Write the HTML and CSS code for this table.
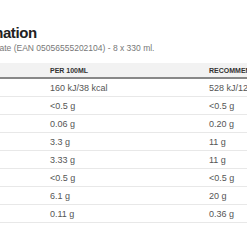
FILE: index.html
```html
<!DOCTYPE html>
<html>
<head>
<meta charset="utf-8">
<link rel="stylesheet" href="styles.css">
</head>
<body>
<div class="page">
  <h2 class="title">Nutrition information</h2>
  <p class="subtitle">Lean Protein Shake Chocolate (EAN 05056555202104) - 8 x 330 ml.</p>
  <table class="nutri">
    <thead>
      <tr><th class="c1">Nutrient</th><th class="c2">Per 100ml</th><th class="c3">Recommended serving (330ml)</th></tr>
    </thead>
    <tbody>
      <tr><td class="c1">Energy</td><td>160 kJ/38 kcal</td><td>528 kJ/126 kcal</td></tr>
      <tr><td class="c1">Fat</td><td>&lt;0.5 g</td><td>&lt;0.5 g</td></tr>
      <tr><td class="c1">of which saturates</td><td>0.06 g</td><td>0.20 g</td></tr>
      <tr><td class="c1">Carbohydrate</td><td>3.3 g</td><td>11 g</td></tr>
      <tr><td class="c1">of which sugars</td><td>3.33 g</td><td>11 g</td></tr>
      <tr><td class="c1">Fibre</td><td>&lt;0.5 g</td><td>&lt;0.5 g</td></tr>
      <tr><td class="c1">Protein</td><td>6.1 g</td><td>20 g</td></tr>
      <tr><td class="c1">Salt</td><td>0.11 g</td><td>0.36 g</td></tr>
    </tbody>
  </table>
</div>
</body>
</html>
```
FILE: styles.css
```css
html, body {
  margin: 0;
  padding: 0;
  background: #ffffff;
  overflow: hidden;
}
body {
  font-family: "Liberation Sans", Arial, sans-serif;
  color: #555;
}
.page {
  margin-left: -104px;
  width: 600px;
  padding-top: 24px;
}
.title {
  margin: 0;
  font-size: 15px;
  line-height: 18px;
  letter-spacing: -0.4px;
  font-weight: bold;
  color: #222;
}
.subtitle {
  margin: 0;
  font-size: 8.5px;
  line-height: 12px;
  color: #777;
}
.nutri {
  margin-top: 9px;
  border-collapse: collapse;
  width: 600px;
  table-layout: fixed;
}
.nutri th {
  background: #f2f2f2;
  border-bottom: 2px solid #888;
  font-size: 7px;
  font-weight: bold;
  text-transform: uppercase;
  color: #333;
  text-align: left;
  height: 14px;
  padding: 0 8px;
  white-space: nowrap;
}
.nutri td {
  font-size: 9px;
  height: 17px;
  padding: 0 8px;
  border-bottom: 1px solid #e8e8e8;
  color: #555;
  white-space: nowrap;
}
.nutri .c1 { width: 130px; }
.nutri .c2 { width: 143px; }
```
